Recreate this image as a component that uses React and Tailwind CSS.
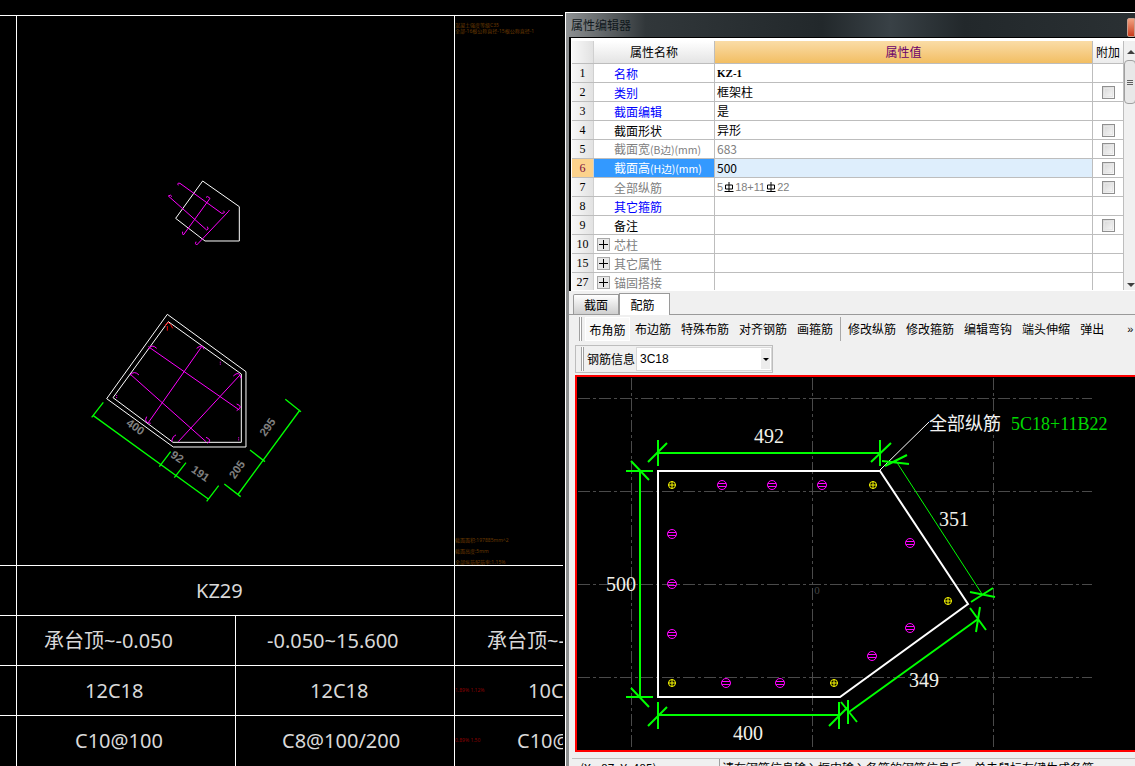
import React from "react";

const CJK = "font-['Noto_Sans_CJK_SC','Noto_Sans',sans-serif]";

const rows = [
  { no: "1", name: "名称", color: "text-[#0000ff]", value: "KZ-1", serif: true },
  { no: "2", name: "类别", color: "text-[#0000ff]", value: "框架柱", check: true },
  { no: "3", name: "截面编辑", color: "text-[#0000ff]", value: "是" },
  { no: "4", name: "截面形状", color: "text-black", value: "异形", check: true },
  { no: "5", name: "截面宽", suffix: "(B边)(mm)", color: "text-[#808080]", value: "683", gray: true, check: true },
  { no: "6", name: "截面高", suffix: "(H边)(mm)", color: "text-white", value: "500", active: true, check: true },
  { no: "7", name: "全部纵筋", color: "text-[#808080]", rebar: true, check: true },
  { no: "8", name: "其它箍筋", color: "text-[#0000ff]", value: "" },
  { no: "9", name: "备注", color: "text-black", value: "", check: true },
  { no: "10", name: "芯柱", color: "text-[#808080]", value: "", plus: true },
  { no: "15", name: "其它属性", color: "text-[#808080]", value: "", plus: true },
  { no: "27", name: "锚固搭接", color: "text-[#808080]", value: "", plus: true },
];

const toolsA = ["布边筋", "特殊布筋", "对齐钢筋", "画箍筋"];
const toolsB = ["修改纵筋", "修改箍筋", "编辑弯钩", "端头伸缩", "弹出"];

const Checkbox = () => (
  <div className="h-[13px] w-[13px] border border-[#8f8f8f] bg-gradient-to-br from-[#d4d4d4] to-[#fbfbfb] p-px">
    <div className="h-full w-full border border-[#e6e6e6]" />
  </div>
);

const PlusBox = () => (
  <div className="flex h-[13px] w-[13px] items-center justify-center border border-[#a8a8a8] bg-[#e8e8e8]">
    <svg width="9" height="9" viewBox="0 0 9 9">
      <path d="M4.5 0V9M0 4.5H9" stroke="#000" strokeWidth="1" />
    </svg>
  </div>
);

const RebarGlyph = () => (
  <svg width="10" height="12" viewBox="0 0 10 12" className="mx-px inline-block">
    <path d="M1.5 4H8.5V8H1.5ZM5 1V10.5M0.5 10.5H9.5" fill="none" stroke="#000" strokeWidth="1" />
  </svg>
);

const Grip = () => <div className="mx-[3px] h-[24px] w-[3px] shrink-0 border-x border-x-[#a0a0a0] bg-white" />;

const Row = ({ row }) => (
  <div className={`flex h-[19px] border-b border-[#bdbdbd] text-[12px] leading-[18px] ${CJK}`}>
    <div
      className={`flex w-[22px] items-center justify-center border-r border-[#d0d0d0] font-['Liberation_Serif',serif] ${
        row.active ? "bg-[#fcd28c] text-[#7a0a3c]" : "bg-gradient-to-r from-[#f8f8f8] to-[#e2e2e2]"
      }`}
    >
      {row.no}
    </div>
    <div className={`flex w-[121px] items-center border-r border-[#bdbdbd] ${row.active ? "bg-[#3399ff]" : ""} ${row.color}`}>
      <div className="ml-[3px] w-[17px]">{row.plus && <PlusBox />}</div>
      <span className="whitespace-nowrap pt-px">
        {row.name}
        {row.suffix && <span className="text-[10.5px]">{row.suffix}</span>}
      </span>
    </div>
    <div
      className={`flex w-[378px] items-center border-r border-[#bdbdbd] pl-[2px] ${row.active ? "bg-[#deeefc]" : ""} ${
        row.gray || row.rebar ? "text-[#808080]" : "text-black"
      } ${row.serif ? "font-['Liberation_Serif',serif] text-[11px] font-bold" : ""}`}
    >
      {row.rebar ? (
        <span className="flex items-center font-['Liberation_Sans',sans-serif] text-[11px]">
          5<RebarGlyph />18+11<RebarGlyph />22
        </span>
      ) : (
        row.value
      )}
    </div>
    <div className="flex w-[31px] items-center justify-center border-r border-[#bdbdbd]">{row.check && <Checkbox />}</div>
  </div>
);

const Rebar = ({ x, y, yellow }) => (
  <g fill="none" stroke={yellow ? "#ffff00" : "#ff00ff"} strokeWidth="1">
    <circle cx={x} cy={y} r={yellow ? 3.5 : 4.5} />
    {yellow ? (
      <path d={`M${x - 3.5} ${y}H${x + 3.5}M${x} ${y - 3.5}V${y + 3.5}`} />
    ) : (
      <path d={`M${x - 4} ${y - 1.5}H${x + 4}M${x - 4} ${y + 1.5}H${x + 4}`} />
    )}
  </g>
);

const bars = [
  [672, 485, 1], [722, 485], [772, 485], [822, 485], [873, 485, 1],
  [672, 534], [672, 584], [672, 634],
  [672, 683, 1], [726, 683], [780, 683], [834, 683, 1],
  [910, 543], [948, 601, 1], [910, 628], [872, 656],
];

const DimText = ({ x, y, children }) => (
  <text x={x} y={y} textAnchor="middle" fontFamily="Liberation Serif, serif" fontSize="20" fill="#f2f2ea">
    {children}
  </text>
);

const SectionCanvas = () => (
  <svg width="568" height="373" viewBox="577 377 568 373" className="block">
    <g stroke="#4a4a4a" strokeWidth="1" strokeDasharray="12 3 3 3" fill="none">
      <path d="M578 398.5H1092M578 491.5H1092M578 584.5H1092M578 677.5H1092" />
      <path d="M631.5 378V749M812.5 378V749M993.5 378V749" />
    </g>
    <text x="817" y="594" textAnchor="middle" fontSize="11" fontFamily="Liberation Serif, serif" fill="#444">0</text>
    <path d="M658 471H880L968 604L840 697H658Z" fill="none" stroke="#fff" strokeWidth="2" />
    <path d="M880 470L929 422" stroke="#fff" strokeWidth="1" />
    <g stroke="#00ff00" strokeWidth="2" fill="none">
      <path d="M658 453H880M658 440V466M648 462L667 443M880 440V466M871 462L891 443" />
      <path d="M640 471V697M626 471H653M631 461L649 480M626 697H653M631 688L649 707" />
      <path d="M658 715H839M658 702V729M648 726L667 707M839 702V729M829 726L848 707" />
      <path d="M849 712L978 619M980 607L976 632M970 608L986 630M848 700V724M841 702L857 722" />
      <path d="M882 461L909 464M885 466L907 455M970 592L995 597M971 602L993 588" />
    </g>
    <path d="M896 461L982 594" stroke="#00ff00" strokeWidth="1" />
    {bars.map(([x, y, yellow]) => (
      <Rebar key={`${x}-${y}`} x={x} y={y} yellow={yellow} />
    ))}
    <DimText x={769} y={443}>492</DimText>
    <DimText x={954} y={526}>351</DimText>
    <DimText x={621} y={591}>500</DimText>
    <DimText x={924} y={687}>349</DimText>
    <DimText x={748} y={740}>400</DimText>
    <text x="929" y="430" fontFamily="Noto Sans CJK SC, sans-serif" fontSize="18" fill="#f2f2f2">全部纵筋</text>
    <text x="1011" y="430" fontFamily="Liberation Serif, serif" fontSize="18" fill="#00d800">5C18+11B22</text>
  </svg>
);

const GrayLabel = ({ x, y, angle, children }) => (
  <text
    x={x}
    y={y}
    transform={`rotate(${angle} ${x} ${y})`}
    textAnchor="middle"
    dominantBaseline="middle"
    fontFamily="Liberation Sans, sans-serif"
    fontWeight="700"
    fontSize="34"
    fill="#808080"
  >
    {children}
  </text>
);

const PlanDrawing = () => (
  <svg width="436" height="549" viewBox="17 16 436 549" className="block">
    {/* small column */}
    <g transform="translate(150 170) scale(0.3333)" fill="none" strokeWidth="3">
      <path d="M158 33L268 110V213H165L77 145L158 33Z" stroke="#fff" />
      <g stroke="#ff00ff">
        <path d="M90 40L215 130Q228 130 220 122M90 40Q80 38 85 46" />
        <path d="M55 78L170 180Q178 178 172 170M55 78Q62 72 66 80" />
        <path d="M180 85L100 195Q96 190 98 185M180 85Q172 76 168 82" />
        <path d="M235 125L140 225Q134 222 138 215M235 125Q240 122 236 120" />
      </g>
    </g>
    {/* large column */}
    <g transform="translate(80 300) scale(0.3333)" fill="none" strokeWidth="3">
      <path d="M262 43L498 215V441H280L80 296Z" stroke="#fff" />
      <path d="M265 65L484 222V427H279L99 293Z" stroke="#fff" />
      <g stroke="#ff00ff">
        <path d="M205 140L478 330M150 222L378 425M365 140L205 368M480 225L295 425" />
        <path d="M205 148Q215 130 230 145M150 226Q162 210 177 225M350 145Q368 130 372 148" />
        <path d="M470 312Q492 320 470 332M378 412Q398 420 382 430M460 228Q478 210 483 235" />
        <path d="M200 350Q190 368 212 370M275 425Q278 408 288 405" />
        <path d="M421 185V195M110 285V295M476 412V422" strokeDasharray="3 3" />
      </g>
      <path d="M255 78Q265 55 278 85M262 78V92" stroke="#ff0000" />
      <g stroke="#00ff00" strokeWidth="4">
        <path d="M40 347L385 597M70 307L35 352M272 455L238 500M318 488L283 533M416 557L380 604" />
        <path d="M475 582L660 330M433 552L482 590M510 450L555 485M616 298L663 335" />
      </g>
      <GrayLabel x={165} y={383} angle={35}>400</GrayLabel>
      <GrayLabel x={290} y={473} angle={35}>92</GrayLabel>
      <GrayLabel x={360} y={523} angle={35}>191</GrayLabel>
      <GrayLabel x={473} y={510} angle={-55}>205</GrayLabel>
      <GrayLabel x={565} y={383} angle={-55}>295</GrayLabel>
    </g>
  </svg>
);

const TableCell = ({ pad, children, className = "" }) => (
  <div className={`flex items-center whitespace-nowrap ${pad} ${className}`}>{children}</div>
);

const NoteText = ({ children, className = "" }) => (
  <div className={`whitespace-nowrap text-[5px] leading-[6px] text-[#6b3a00] ${className}`}>{children}</div>
);

export default function App() {
  return (
    <div className={`flex h-[766px] w-[1135px] overflow-hidden bg-black ${CJK}`}>
      {/* ---------- CAD DRAWING ---------- */}
      <div className="w-[565px] shrink-0 font-['Noto_Sans','Noto_Sans_CJK_SC',sans-serif] text-[20px] text-[#d9d9d9]">
        <div className="mr-[2px] mt-[15px] grid grid-cols-[16px_218px_218px_108px] grid-rows-[549px_49px_49px_49px_50px] gap-px bg-white pt-px [&>div]:overflow-hidden [&>div]:bg-black">
          <div />
          <div className="col-span-2">
            <PlanDrawing />
          </div>
          <div className="flex flex-col justify-between pt-[6px]">
            <div>
              <NoteText>混凝土强度等级C35</NoteText>
              <NoteText>全部-16根公称直径-15根公称直径-1</NoteText>
            </div>
            <div className="flex flex-col gap-[5px]">
              <NoteText>截面面积:197885mm^2</NoteText>
              <NoteText>截面高度:5mm</NoteText>
              <NoteText>全部纵筋配筋率:1.15%</NoteText>
            </div>
          </div>

          <div />
          <TableCell pad="pl-[179px]" className="col-span-2">KZ29</TableCell>
          <div />

          <div />
          <TableCell pad="pl-[27px]">承台顶~-0.050</TableCell>
          <TableCell pad="pl-[31px]">-0.050~15.600</TableCell>
          <TableCell pad="pl-[32px]">承台顶~-0.050</TableCell>

          <div />
          <TableCell pad="pl-[68px]">12C18</TableCell>
          <TableCell pad="pl-[74px]">12C18</TableCell>
          <TableCell pad="">
            <span className="w-[73px] shrink-0 text-[5px] text-[#8a0000]">1.89% 1.12%</span>
            10C18
          </TableCell>

          <div />
          <TableCell pad="pl-[58px]">C10@100</TableCell>
          <TableCell pad="pl-[46px]">C8@100/200</TableCell>
          <TableCell pad="">
            <span className="w-[62px] shrink-0 text-[5px] text-[#8a0000]">0.89% 1.50</span>
            C10@100
          </TableCell>
        </div>
      </div>

      {/* ---------- PROPERTY EDITOR ---------- */}
      <div className="mt-[12px] h-[754px] w-[570px] shrink-0 overflow-hidden border-l border-t border-white bg-gradient-to-r from-[#8c8e8f] to-[#3a3d3f]">
        {/* title bar */}
        <div className="relative flex h-[24px] items-center bg-[linear-gradient(90deg,#8e9193_0%,#31373a_14%,#22282b_45%,#394146_57%,#22282b_70%,#2a3033_100%)] pl-[5px] text-[12px] text-[#10181c]">
          属性编辑器
          <div className="absolute right-0 top-[5px] h-[19px] w-[8px] rounded-l-[2px] border border-[#c8a090] bg-gradient-to-b from-[#f0a080] to-[#c83818]" />
        </div>

        {/* grid */}
        <div className="ml-[3px] h-[254px] border-l-2 border-t border-l-black border-t-black bg-white pl-px pt-[3px]">
          <div className="flex">
            <div>
              <div className={`flex h-[23px] border-b border-[#bdbdbd] text-[12px] ${CJK}`}>
                <div className="w-[22px] border-r border-[#d0d0d0] bg-gradient-to-r from-[#f8f8f8] to-[#e2e2e2]" />
                <div className="flex w-[121px] items-center justify-center border-r border-[#bdbdbd] bg-gradient-to-b from-white to-[#e4e4e4] text-black">
                  属性名称
                </div>
                <div className="flex w-[378px] items-center justify-center border-r border-[#bdbdbd] bg-gradient-to-b from-[#fadca6] to-[#f2be62] text-[#6a006a]">
                  属性值
                </div>
                <div className="flex w-[31px] items-center justify-center border-r border-[#bdbdbd] bg-gradient-to-b from-white to-[#ececec] text-black">
                  附加
                </div>
              </div>
              <div className="h-[226px] overflow-hidden">
                {rows.map((row) => (
                  <Row key={row.no} row={row} />
                ))}
              </div>
            </div>
            {/* scrollbar */}
            <div className="relative h-[249px] w-[12px] bg-[#f0f0f0]">
              <div className="absolute left-[3px] top-[9px] h-0 w-0 border-x-[4px] border-b-[4px] border-x-transparent border-b-[#404040]" />
              <div className="absolute left-0 top-[19px] flex h-[44px] w-[12px] flex-col justify-center gap-px rounded-sm border border-[#a0a0a0] bg-[#e8e8e8] pl-[2px]">
                <div className="h-px w-[6px] bg-[#606060]" />
                <div className="h-px w-[6px] bg-[#606060]" />
                <div className="h-px w-[6px] bg-[#606060]" />
              </div>
              <div className="absolute bottom-[3px] left-[3px] h-0 w-0 border-x-[4px] border-t-[4px] border-x-transparent border-t-[#404040]" />
            </div>
          </div>
        </div>

        {/* tabs and tools */}
        <div className="ml-[3px] h-[476px] bg-[#f0f0f0]">
          <div className="flex h-[24px] items-end border-b border-[#9a9a9a] pl-[4px] text-[12px] text-black">
            <div className="flex h-[20px] w-[46px] items-center justify-center rounded-tl-[2px] border border-b-0 border-[#9a9a9a] bg-gradient-to-b from-white to-[#cfcfcf]">
              截面
            </div>
            <div className="-mb-px flex h-[22px] w-[51px] items-center justify-center border border-b-0 border-[#9a9a9a] bg-white pr-[4px]">
              配筋
            </div>
          </div>
          <div className="flex h-[24px] items-center whitespace-nowrap pl-[7px] pt-[4px] text-[12px] text-black">
            <Grip />
            <div className="flex h-[24px] w-[45px] shrink-0 items-center justify-center border border-white bg-[#f8f8f8] pt-[2px]">布角筋</div>
            <div className="ml-[5px] flex shrink-0 gap-[10px]">
              {toolsA.map((tool) => (
                <span key={tool}>{tool}</span>
              ))}
            </div>
            <div className="mx-[7px] h-[24px] w-px shrink-0 bg-[#a8a8a8]" />
            <div className="flex shrink-0 gap-[10px]">
              {toolsB.map((tool) => (
                <span key={tool}>{tool}</span>
              ))}
            </div>
            <span className="ml-[23px] font-['Liberation_Sans',sans-serif] text-[11px] leading-[6px]">»</span>
          </div>
          <div className="ml-[6px] mt-[6px] flex h-[28px] w-[198px] items-center border border-[#bdbdbd] pl-[2px] text-[12px] text-black">
            <Grip />
            <span className="whitespace-nowrap">钢筋信息</span>
            <div className="ml-px flex h-[24px] w-[137px] items-center justify-between border border-[#d8d8d8] bg-white pl-[3px] pr-[1px] font-['Liberation_Sans',sans-serif]">
              3C18
              <div className="flex h-[20px] w-[9px] items-center justify-center bg-[#ececec]">
                <div className="h-0 w-0 border-x-[3px] border-t-[3px] border-x-transparent border-t-black" />
              </div>
            </div>
          </div>
          <div className="ml-[6px] mt-[2px] w-[572px] border-2 border-[#ff0000] bg-black">
            <SectionCanvas />
          </div>
          <div className="ml-[3px] mt-[6px] flex border-t border-[#c0c0c0] text-[12px] text-black">
            <div className="w-[148px] border-r border-[#a0a0a0] pl-[8px]">(X: -87, Y: 485)</div>
            <div className="whitespace-nowrap pl-[2px]">请在钢筋信息输入框中输入各筋的钢筋信息后，单击鼠标左键生成各筋</div>
          </div>
        </div>
      </div>
    </div>
  );
}
